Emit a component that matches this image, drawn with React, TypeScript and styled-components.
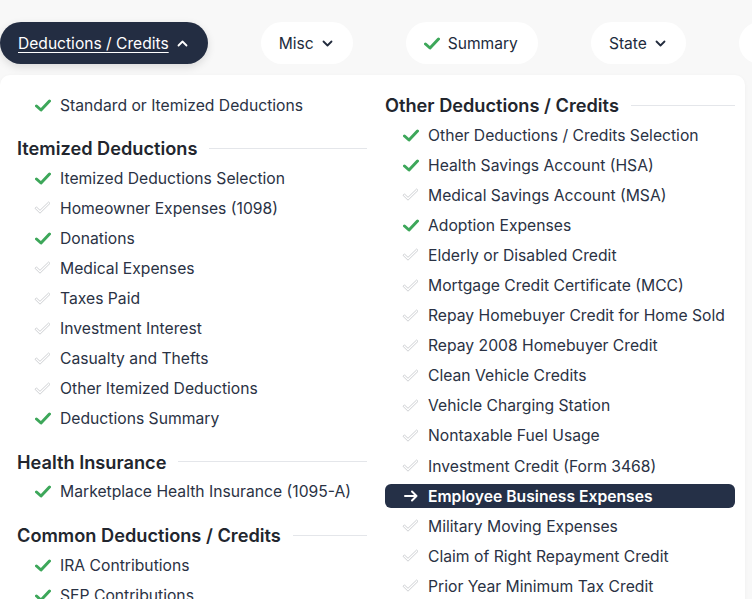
import React from 'react';
import styled, {createGlobalStyle} from 'styled-components';

const GlobalStyle = createGlobalStyle`
  html, body {
    margin: 0;
    padding: 0;
    background: #f8f8f8;
  }
  body {
    font-family: 'Inter', 'Noto Sans', sans-serif;
    color: #2a3244;
  }
`;

const Page = styled.div`
  width: 752px;
  height: 599px;
  overflow: hidden;
  padding-top: 22px;
  box-sizing: border-box;
`;

const Nav = styled.div`
  display: flex;
  gap: 53px;
  height: 42px;
  white-space: nowrap;
`;

const Pill = styled.button<{ $active?: boolean }>`
  display: flex;
  align-items: center;
  gap: 8px;
  height: 42px;
  padding: 0 20px 0 18px;
  border: none;
  border-radius: 21px;
  font-family: inherit;
  font-size: 15.6px;
  font-weight: 400;
  flex-shrink: 0;
  background: ${p => (p.$active ? '#232d42' : '#ffffff')};
  color: ${p => (p.$active ? '#ffffff' : '#222b3d')};
  box-shadow: ${p => (p.$active ? '0 3px 8px rgba(0,0,0,0.12)' : 'none')};
`;

const PillLabel = styled.span<{ $underline?: boolean }>`
  text-decoration: ${p => (p.$underline ? 'underline' : 'none')};
  text-underline-offset: 3px;
`;

const Panel = styled.div`
  margin-top: 11px;
  width: 745px;
  height: 600px;
  background: #ffffff;
  border-radius: 10px;
  box-shadow: 0 1px 4px rgba(0,0,0,0.04);
  padding: 15px 17px 0;
  box-sizing: border-box;
  display: grid;
  grid-template-columns: 350px 350px;
  column-gap: 18px;
`;

const Column = styled.div`
  display: flex;
  flex-direction: column;
`;

const Heading = styled.div<{ $first?: boolean }>`
  display: flex;
  align-items: center;
  gap: 12px;
  height: 30px;
  margin-top: ${p => (p.$first ? '0' : '13px')};
  font-size: 18.2px;
  font-weight: 600;
  color: #22262e;
  white-space: nowrap;

  &::after {
    content: '';
    flex: 1;
    height: 1px;
    background: #e4e6ea;
  }
`;

const Item = styled.div`
  height: 30.1px;
  display: flex;
  align-items: center;
`;

const ItemBox = styled.div<{ $active?: boolean }>`
  flex: 1;
  height: 24px;
  display: flex;
  align-items: center;
  gap: 9px;
  padding-left: 17px;
  border-radius: 6px;
  font-size: 15.7px;
  white-space: nowrap;
  background: ${p => (p.$active ? '#253047' : 'transparent')};
  color: ${p => (p.$active ? '#ffffff' : '#2a3244')};
  font-weight: ${p => (p.$active ? 600 : 400)};
`;

const IconWrap = styled.span`
  width: 17px;
  height: 16px;
  display: flex;
  align-items: center;
  justify-content: center;
  flex-shrink: 0;
`;

type Status = 'done' | 'todo' | 'current';

const CheckDone = () => (
  <svg width="16" height="13" viewBox="0 0 16 13">
    <path d="M1.5 7 L6 11 L14.5 2" fill="none" stroke="#3da75a" strokeWidth="3" strokeLinecap="round" strokeLinejoin="round" />
  </svg>
);

const CheckTodo = () => (
  <svg width="17" height="14" viewBox="0 0 17 14">
    <path
      d="M1 7.3 L2.4 5.9 L6 9.3 L14.6 1 L16 2.4 L6 12.2 Z"
      fill="none"
      stroke="#cfd1d4"
      strokeWidth="1"
      strokeLinejoin="round"
    />
  </svg>
);

const Arrow = () => (
  <svg width="14" height="12" viewBox="0 0 14 12">
    <path d="M1 6 H12.5 M8 1.5 L12.5 6 L8 10.5" fill="none" stroke="#ffffff" strokeWidth="2" strokeLinecap="round" strokeLinejoin="round" />
  </svg>
);

const Chevron = ({up, color}: { up?: boolean; color: string }) => (
  <svg width="11" height="7" viewBox="0 0 11 7">
    <path
      d={up ? 'M1.5 5.5 L5.5 1.5 L9.5 5.5' : 'M1.5 1.5 L5.5 5.5 L9.5 1.5'}
      fill="none"
      stroke={color}
      strokeWidth="1.8"
      strokeLinecap="round"
      strokeLinejoin="round"
    />
  </svg>
);

const Row = ({label, status}: { label: string; status: Status }) => (
  <Item>
    <ItemBox $active={status === 'current'}>
      <IconWrap>
        {status === 'done' && <CheckDone />}
        {status === 'todo' && <CheckTodo />}
        {status === 'current' && <Arrow />}
      </IconWrap>
      {label}
    </ItemBox>
  </Item>
);

type Section = { title?: string; items: [string, Status][] };

const leftSections: Section[] = [
  {items: [['Standard or Itemized Deductions', 'done']]},
  {
    title: 'Itemized Deductions',
    items: [
      ['Itemized Deductions Selection', 'done'],
      ['Homeowner Expenses (1098)', 'todo'],
      ['Donations', 'done'],
      ['Medical Expenses', 'todo'],
      ['Taxes Paid', 'todo'],
      ['Investment Interest', 'todo'],
      ['Casualty and Thefts', 'todo'],
      ['Other Itemized Deductions', 'todo'],
      ['Deductions Summary', 'done'],
    ],
  },
  {title: 'Health Insurance', items: [['Marketplace Health Insurance (1095-A)', 'done']]},
  {
    title: 'Common Deductions / Credits',
    items: [
      ['IRA Contributions', 'done'],
      ['SEP Contributions', 'done'],
    ],
  },
];

const rightSections: Section[] = [
  {
    title: 'Other Deductions / Credits',
    items: [
      ['Other Deductions / Credits Selection', 'done'],
      ['Health Savings Account (HSA)', 'done'],
      ['Medical Savings Account (MSA)', 'todo'],
      ['Adoption Expenses', 'done'],
      ['Elderly or Disabled Credit', 'todo'],
      ['Mortgage Credit Certificate (MCC)', 'todo'],
      ['Repay Homebuyer Credit for Home Sold', 'todo'],
      ['Repay 2008 Homebuyer Credit', 'todo'],
      ['Clean Vehicle Credits', 'todo'],
      ['Vehicle Charging Station', 'todo'],
      ['Nontaxable Fuel Usage', 'todo'],
      ['Investment Credit (Form 3468)', 'todo'],
      ['Employee Business Expenses', 'current'],
      ['Military Moving Expenses', 'todo'],
      ['Claim of Right Repayment Credit', 'todo'],
      ['Prior Year Minimum Tax Credit', 'todo'],
    ],
  },
];

const renderSections = (sections: Section[]) =>
  sections.map((s, i) => (
    <React.Fragment key={i}>
      {s.title && <Heading $first={i === 0}>{s.title}</Heading>}
      {s.items.map(([label, status]) => (
        <Row key={label} label={label} status={status} />
      ))}
    </React.Fragment>
  ));

const App = () => {
  return (
    <Page>
      <GlobalStyle />
      <Nav>
        <Pill $active>
          <PillLabel $underline>Deductions / Credits</PillLabel>
          <Chevron up color="#ffffff" />
        </Pill>
        <Pill>
          <PillLabel>Misc</PillLabel>
          <Chevron color="#222b3d" />
        </Pill>
        <Pill>
          <CheckDone />
          <PillLabel>Summary</PillLabel>
        </Pill>
        <Pill>
          <PillLabel>State</PillLabel>
          <Chevron color="#222b3d" />
        </Pill>
        <Pill>
          <PillLabel>Review</PillLabel>
        </Pill>
      </Nav>
      <Panel>
        <Column>{renderSections(leftSections)}</Column>
        <Column>{renderSections(rightSections)}</Column>
      </Panel>
    </Page>
  );
};

export default App;
